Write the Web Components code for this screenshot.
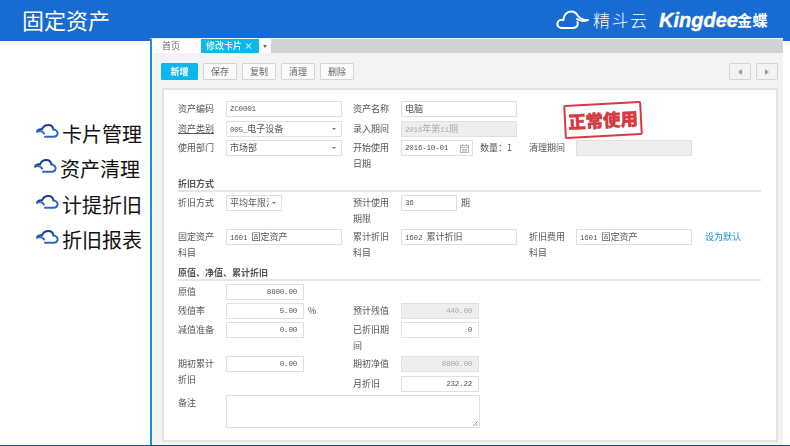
<!DOCTYPE html>
<html lang="zh">
<head>
<meta charset="utf-8">
<title>固定资产</title>
<style>
    html, body { margin: 0; padding: 0; }
    body { width: 790px; height: 446px; overflow: hidden; background: #fff; font-family: "Noto Sans CJK SC", "Liberation Sans", sans-serif; }
    .content { display: flex; align-items: stretch; height: 407px; margin-top: -3px; }
    .foot { height: 1px; background: #1e4e86; }
</style>
</head>
<body>

<app-header title-text="固定资产"></app-header>
<div class="content">
    <side-nav>
        <nav-item style="margin-left:36px">卡片管理</nav-item>
        <nav-item style="margin-left:34px">资产清理</nav-item>
        <nav-item style="margin-left:36px">计提折旧</nav-item>
        <nav-item style="margin-left:36px">折旧报表</nav-item>
    </side-nav>
    <card-window>
        <tab-bar slot="tabs"></tab-bar>
        <tool-btn slot="tools" primary>新增</tool-btn>
        <tool-btn slot="tools">保存</tool-btn>
        <tool-btn slot="tools">复制</tool-btn>
        <tool-btn slot="tools">清理</tool-btn>
        <tool-btn slot="tools">删除</tool-btn>
        <pager-btn slot="pager" dir="left"></pager-btn>
        <pager-btn slot="pager" dir="right"></pager-btn>
        <asset-form></asset-form>
    </card-window>
</div>
<div class="foot"></div>

<script>
class AppHeader extends HTMLElement {
    constructor() {
        super();
        this.shadow = this.attachShadow({ mode: 'open' });
    }
    connectedCallback() {
        this.shadow.innerHTML =
        `
        <style>
            :host { display: flex; align-items: center; height: 41px; background: #186bd0; color: #fff; }
            h1 { margin: 0 0 3px 22px; font: 400 22px/30px "Noto Sans CJK SC", sans-serif; flex: 1; }
            .logo { display: flex; align-items: center; margin: 0 22px 2px 0; }
            .logo svg { display: block; margin-right: 4px; }
            .jd { font: 300 17px/22px "Noto Sans CJK SC", sans-serif; letter-spacing: 1.500px; width: 66px; }
            .kd { font: italic 700 20px/24px "Liberation Sans", sans-serif; width: 78px; -webkit-text-stroke: .4px #fff; }
            .jw { font: 700 15px/20px "Noto Sans CJK SC", sans-serif; letter-spacing: .5px; }
        </style>
        <h1>${this.getAttribute('title-text')}</h1>
        <div class="logo">
            <svg width="33" height="20" viewBox="0 0 33 20" fill="none" stroke="#fff" stroke-width="2" stroke-linecap="round" stroke-linejoin="round">
                <path d="M6 18C2 18 1 15 1.500 13C2 10.500 5 9.500 7.500 10C7.500 5 11 1.500 15 1.500C19 1.500 21 4 22 6C24 8.500 27 10 32 10C28 11.500 24 11 21 9"/>
                <path d="M6 18H17C21 18 22.500 15 21.500 12"/>
            </svg>
            <span class="jd">精斗云</span>
            <span class="kd">Kingdee</span>
            <span class="jw">金蝶</span>
        </div>
        `;
    }
}

class SideNav extends HTMLElement {
    constructor() {
        super();
        this.attachShadow({ mode: 'open' }).innerHTML =
        `
        <style>
            :host { display: flex; flex-direction: column; width: 150px; flex: none; padding-top: 78px; box-sizing: border-box; }
        </style>
        <slot></slot>
        `;
    }
}

class NavItem extends HTMLElement {
    constructor() {
        super();
        this.attachShadow({ mode: 'open' }).innerHTML =
        `
        <style>
            :host { display: flex; align-items: center; height: 35.5px; font: 400 20px/28px "Noto Sans CJK SC", sans-serif; color: #111; white-space: nowrap; }
            svg { display: block; flex: none; margin: 0 3px 6px 0; }
        </style>
        <svg width="23" height="14" viewBox="0 0 23 14" fill="none" stroke-width="2" stroke-linecap="round" stroke-linejoin="round">
            <path d="M1 7.500C2 5.500 4 5 6 5.500C7 2.500 10 1 12.500 1C15 1 17 3 17.500 5.500" stroke="#1c3f94"/>
            <path d="M1 7.500C4 6.500 7 7.500 8 9.500M17.500 5.500C20 5.500 22 7.500 21.500 10C21 12 19 12.800 17.500 12.800H9" stroke="#2a68c0"/>
        </svg>
        <slot></slot>
        `;
    }
}

class CardWindow extends HTMLElement {
    constructor() {
        super();
        this.attachShadow({ mode: 'open' }).innerHTML =
        `
        <style>
            :host { display: flex; flex-direction: column; width: 633px; flex: none; box-sizing: border-box; border-left: 2px solid #1b8fd8; border-top: 1px solid #f2f4f6; background: #f3f3f3; filter: blur(.35px); }
            .tools { display: flex; justify-content: space-between; padding: 10px 5px 0 9px; height: 35px; box-sizing: border-box; flex: none; }
            .left, .right { display: flex; gap: 5px; }
            .body { flex: 1; margin: 0 5px 3px 10px; border: 2px solid #e3e3e3; background: #fff; min-height: 0; position: relative; }
        </style>
        <slot name="tabs"></slot>
        <div class="tools">
            <div class="left"><slot name="tools"></slot></div>
            <div class="right"><slot name="pager"></slot></div>
        </div>
        <div class="body"><slot></slot></div>
        `;
    }
}

class TabBar extends HTMLElement {
    constructor() {
        super();
        this.attachShadow({ mode: 'open' }).innerHTML =
        `
        <style>
            :host { display: flex; height: 14px; background: #cfd3d6; font: 400 9px/14px "Noto Sans CJK SC", sans-serif; flex: none; }
            .home { width: 39px; padding-left: 10px; background: #fff; color: #666; }
            .active { display: flex; justify-content: space-between; width: 58px; box-sizing: border-box; padding: 0 6px 0 5px; background: #0eb6ee; color: #fff; font-weight: 500; }
            .x { font-size: 9px; color: #dff; }
            .more { display: flex; align-items: center; justify-content: center; width: 12px; background: #fff; }
            .more i { border: 2.500px solid transparent; border-top: 3px solid #666; border-bottom: 0; }
        </style>
        <div class="home">首页</div>
        <div class="active"><span>修改卡片</span><span class="x">×</span></div>
        <div class="more"><i></i></div>
        `;
    }
}

class ToolBtn extends HTMLElement {
    constructor() {
        super();
        this.attachShadow({ mode: 'open' }).innerHTML =
        `
        <style>
            :host { display: flex; align-items: center; justify-content: center; width: 34px; height: 17px; box-sizing: border-box; border: 1px solid #d4d4d4; border-radius: 1px; background: #fafafa; color: #666; font: 400 9px/15px "Noto Sans CJK SC", sans-serif; }
            :host([primary]) { width: 37px; background: #0eb6ee; border-color: #0eb6ee; color: #fff; font-weight: 700; }
        </style>
        <slot></slot>
        `;
    }
}

class PagerBtn extends HTMLElement {
    constructor() {
        super();
        const left = this.getAttribute('dir') === 'left';
        this.attachShadow({ mode: 'open' }).innerHTML =
        `
        <style>
            :host { display: flex; align-items: center; justify-content: center; width: 22px; height: 17px; box-sizing: border-box; border: 1px solid #d4d4d4; border-radius: 1px; background: #f3f3f3; }
            i { border-top: 3px solid transparent; border-bottom: 3px solid transparent; ${left ? 'border-right' : 'border-left'}: 4px solid #9a9a9a; }
        </style>
        <i></i>
        `;
    }
}

class FormField extends HTMLElement {
    constructor() {
        super();
        this.attachShadow({ mode: 'open' }).innerHTML =
        `
        <style>
            :host { display: grid; grid-template-columns: var(--lw, 48px) auto 1fr; align-items: start; font: 400 9px/15.500px "Noto Sans CJK SC", "Liberation Sans", sans-serif; color: #555; }
            .label { padding-right: 4px; box-sizing: border-box; }
            :host([u]) .label { text-decoration: underline; }
            .box { position: relative; display: flex; align-items: center; gap: 3px; box-sizing: border-box; width: var(--w, 116px); height: var(--h, 16px); padding: 0 3px 0 3px; border: 1px solid #e0e0e0; background: #fff; color: #555; font: 400 7.600px/14px "Liberation Mono", "Noto Sans CJK SC", monospace; letter-spacing: -.25px; }
            .t { flex: 1; min-width: 0; overflow: hidden; white-space: nowrap; }
            :host([right]) .t { text-align: right; }
            :host([off]) .box { background: #eee; color: #aaa; }
            .arrow { flex: none; margin-right: 2px; border: 2px solid transparent; border-top: 2.500px solid #777; border-bottom: 0; }
            .tail { padding-left: 4px; white-space: nowrap; }
            svg { flex: none; display: block; }
            .grip { position: absolute; right: 1px; bottom: 1px; }
        </style>
        <div class="label"><slot name="label"></slot></div>
        <div class="box"><span class="t"><slot></slot></span><span id="mark"></span></div>
        <div class="tail"><slot name="tail"></slot></div>
        `;
    }
    connectedCallback() {
        const mark = this.shadowRoot.getElementById('mark');
        if (this.hasAttribute('select')) mark.className = 'arrow';
        if (this.hasAttribute('date')) {
            mark.innerHTML = '<svg width="9" height="9" viewBox="0 0 9 9" fill="none" stroke="#b5b5b5"><rect x=".5" y="1.500" width="8" height="7"/><path d="M.5 3.500H8.500M2.500 0V2M6.500 0V2M2 5.500H7M2 7H7"/></svg>';
        }
        if (this.hasAttribute('area')) {
            mark.className = 'grip';
            mark.innerHTML = '<svg width="6" height="6" viewBox="0 0 6 6" stroke="#999"><path d="M1 6L6 1M3.500 6L6 3.500"/></svg>';
        }
        if (this.hasAttribute('w')) this.style.setProperty('--w', this.getAttribute('w') + 'px');
        if (this.hasAttribute('h')) this.style.setProperty('--h', this.getAttribute('h') + 'px');
    }
}

class FormSection extends HTMLElement {
    constructor() {
        super();
        this.attachShadow({ mode: 'open' }).innerHTML =
        `
        <style>
            :host { display: block; border-bottom: 2px solid #e6e6e6; font: 700 9px/13px "Noto Sans CJK SC", sans-serif; color: #555; }
        </style>
        <slot></slot>
        `;
    }
}

class AssetForm extends HTMLElement {
    constructor() {
        super();
        this.attachShadow({ mode: 'open' }).innerHTML =
        `
        <style>
            :host { display: block; padding: 11px 15px 0 14px; }
            .row { display: grid; grid-template-columns: 175px 176px 1fr; height: 16px; margin-bottom: 3px; }
            .tall { height: 32px; }
            .m2 { margin-bottom: 2px; }
            .m4 { margin-bottom: 4px; }
            .m18 { margin-bottom: 18px; }
            form-section.a { margin-top: 5px; margin-bottom: 3px; }
            form-section.b { margin-top: 5px; margin-bottom: 3px; }
            .c { font: 400 9px/14px "Noto Sans CJK SC", sans-serif; letter-spacing: 0; }
            .link { color: #1d8fd6; padding-left: 9px; }
            .third { --lw: 47px; }
            .stamp { position: absolute; left: 400px; top: 13px; width: 78px; height: 34px; box-sizing: border-box; border: 2px solid #d63a42; border-radius: 2px; transform: rotate(-3deg); color: #d63a42; font: 900 17.500px/30px "Noto Sans CJK SC", sans-serif; -webkit-text-stroke: .5px #d63a42; text-align: center; white-space: nowrap; }
            .qty { margin-left: 3px; }
        </style>
        <div class="stamp">正常使用</div>
        <div class="row m4">
            <form-field><span slot="label">资产编码</span>ZC0001</form-field>
            <form-field><span slot="label">资产名称</span><span class="c">电脑</span></form-field>
        </div>
        <div class="row">
            <form-field u select><span slot="label">资产类别</span>005_<span class="c">电子设备</span></form-field>
            <form-field off><span slot="label">录入期间</span>2016<span class="c">年第</span>11<span class="c">期</span></form-field>
        </div>
        <div class="row tall">
            <form-field select><span slot="label">使用部门</span><span class="c">市场部</span></form-field>
            <form-field date w="72"><span slot="label">开始使用日期</span>2016-10-01<span slot="tail" class="qty">数量：1</span></form-field>
            <form-field class="third" off><span slot="label">清理期间</span></form-field>
        </div>
        <form-section class="a">折旧方式</form-section>
        <div class="row tall m2">
            <form-field select w="56"><span slot="label">折旧方式</span><span class="c">平均年限法</span></form-field>
            <form-field w="56"><span slot="label">预计使用期限</span>36<span slot="tail">期</span></form-field>
        </div>
        <div class="row tall">
            <form-field><span slot="label">固定资产科目</span>1601 <span class="c">固定资产</span></form-field>
            <form-field><span slot="label">累计折旧科目</span>1602 <span class="c">累计折旧</span></form-field>
            <form-field class="third"><span slot="label">折旧费用科目</span>1601 <span class="c">固定资产</span><span slot="tail" class="link">设为默认</span></form-field>
        </div>
        <form-section class="b">原值、净值、累计折旧</form-section>
        <div class="row">
            <form-field right w="78"><span slot="label">原值</span>8800.00</form-field>
        </div>
        <div class="row">
            <form-field right w="78"><span slot="label">残值率</span>5.00<span slot="tail">%</span></form-field>
            <form-field right off w="78"><span slot="label">预计残值</span>440.00</form-field>
        </div>
        <div class="row m18">
            <form-field right w="78"><span slot="label">减值准备</span>0.00</form-field>
            <form-field right w="78"><span slot="label">已折旧期间</span>0</form-field>
        </div>
        <div class="row m4">
            <form-field right w="78"><span slot="label">期初累计折旧</span>0.00</form-field>
            <form-field right off w="78"><span slot="label">期初净值</span>8800.00</form-field>
        </div>
        <div class="row">
            <div></div>
            <form-field right w="78"><span slot="label">月折旧</span>232.22</form-field>
        </div>
        <form-field area w="254" h="33"><span slot="label">备注</span></form-field>
        `;
    }
}

customElements.define('app-header', AppHeader);
customElements.define('side-nav', SideNav);
customElements.define('nav-item', NavItem);
customElements.define('card-window', CardWindow);
customElements.define('tab-bar', TabBar);
customElements.define('tool-btn', ToolBtn);
customElements.define('pager-btn', PagerBtn);
customElements.define('form-field', FormField);
customElements.define('form-section', FormSection);
customElements.define('asset-form', AssetForm);
</script>
</body>
</html>
